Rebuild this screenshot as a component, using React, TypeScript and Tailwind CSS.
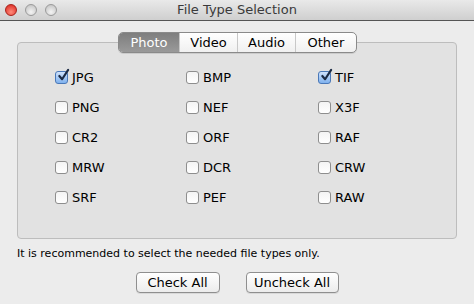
import { useState } from 'react';

const tabs = ['Photo', 'Video', 'Audio', 'Other'];

const rows = [
  ['JPG', 'BMP', 'TIF'],
  ['PNG', 'NEF', 'X3F'],
  ['CR2', 'ORF', 'RAF'],
  ['MRW', 'DCR', 'CRW'],
  ['SRF', 'PEF', 'RAW'],
];

function Box({ on, label, onClick }: { on: boolean; label: string; onClick: () => void }) {
  return (
    <button onClick={onClick} className="flex items-center gap-[4px] text-[13px] text-black">
      <span
        className={
          'relative w-[13px] h-[13px] rounded-[3px] border ' +
          (on
            ? 'border-[#4a78b8] bg-gradient-to-b from-[#cfe2fb] to-[#7fb1ee]'
            : 'border-[#8e8e8e] bg-gradient-to-b from-[#f4f4f4] to-[#ffffff]')
        }
      >
        {on && (
          <svg viewBox="0 0 14 14" className="absolute left-[1px] -top-[3px] w-[13px] h-[13px] overflow-visible">
            <path d="M2.5 7.5 L5.5 11 L12 1" fill="none" stroke="#1b2a44" strokeWidth="2.3" strokeLinecap="round" strokeLinejoin="round" />
          </svg>
        )}
      </span>
      <span>{label}</span>
    </button>
  );
}

export default function App() {
  const [tab, setTab] = useState('Photo');
  const [checked, setChecked] = useState<Record<string, boolean>>({ JPG: true, TIF: true });
  const toggle = (k: string) => setChecked((c) => ({ ...c, [k]: !c[k] }));

  return (
    <div
      className="w-[474px] h-[304px] bg-[#ececec] flex flex-col overflow-hidden"
      style={{ fontFamily: '"DejaVu Sans", "Lucida Grande", sans-serif' }}
    >
      <div className="h-[21px] shrink-0 relative flex items-center justify-center bg-gradient-to-b from-[#e9e9e9] to-[#cfcfcf] border-b border-[#555]">
        <div className="absolute left-[5px] top-[4px] flex gap-[8px]">
          <span className="w-[12px] h-[12px] rounded-full bg-[radial-gradient(circle_at_50%_70%,#ff8a7a,#d9221b)] border border-[#a8211a]" />
          <span className="w-[12px] h-[12px] rounded-full bg-[radial-gradient(circle_at_50%_70%,#f4f4f4,#bdbdbd)] border border-[#9a9a9a]" />
          <span className="w-[12px] h-[12px] rounded-full bg-[radial-gradient(circle_at_50%_70%,#f4f4f4,#bdbdbd)] border border-[#9a9a9a]" />
        </div>
        <span className="text-[13px] text-[#3a3a3a]">File Type Selection</span>
      </div>

      <div className="relative mx-[17px] mt-[21px] h-[197px] rounded-[4px] border border-[#bdbdbd] bg-[#e2e2e2]">
        <div className="absolute left-[100px] -top-[11px] h-[21px] flex rounded-[5px] border border-[#8a8a8a] bg-gradient-to-b from-[#ffffff] to-[#f0f0f0] overflow-hidden text-[13px] shadow-[0_1px_0_rgba(0,0,0,0.1)]">
          {tabs.map((t, i) => (
            <button
              key={t}
              onClick={() => setTab(t)}
              className={
                'h-full flex items-center justify-center ' +
                (i === 0 ? 'w-[60px] ' : i === 3 ? 'w-[61px] ' : 'w-[58px] ') +
                (i > 0 ? 'border-l border-[#c8c8c8] ' : '') +
                (tab === t
                  ? 'bg-gradient-to-b from-[#7e7e7e] to-[#9a9a9a] text-white'
                  : 'text-black')
              }
            >
              {t}
            </button>
          ))}
        </div>

        <div className="pt-[25px] pl-[37px] flex flex-col gap-[17px]">
          {rows.map((r) => (
            <div key={r[0]} className="grid grid-cols-[131px_132px_120px] h-[13px] items-center">
              {r.map((k) => (
                <Box key={k} label={k} on={!!checked[k]} onClick={() => toggle(k)} />
              ))}
            </div>
          ))}
        </div>
      </div>

      <p className="mt-[7px] ml-[17px] text-[11px] text-black">
        It is recommended to select the needed file types only.
      </p>

      <div className="mt-[9px] flex justify-center gap-[26px] text-[13px]">
        <button
          onClick={() => setChecked(Object.fromEntries(rows.flat().map((k) => [k, true])))}
          className="w-[84px] h-[21px] rounded-[4px] border border-[#8f8f8f] bg-gradient-to-b from-[#ffffff] to-[#ececec] shadow-[0_1px_0_rgba(0,0,0,0.08)]"
        >
          Check All
        </button>
        <button
          onClick={() => setChecked({})}
          className="w-[93px] h-[21px] rounded-[4px] border border-[#8f8f8f] bg-gradient-to-b from-[#ffffff] to-[#ececec] shadow-[0_1px_0_rgba(0,0,0,0.08)]"
        >
          Uncheck All
        </button>
      </div>
    </div>
  );
}
